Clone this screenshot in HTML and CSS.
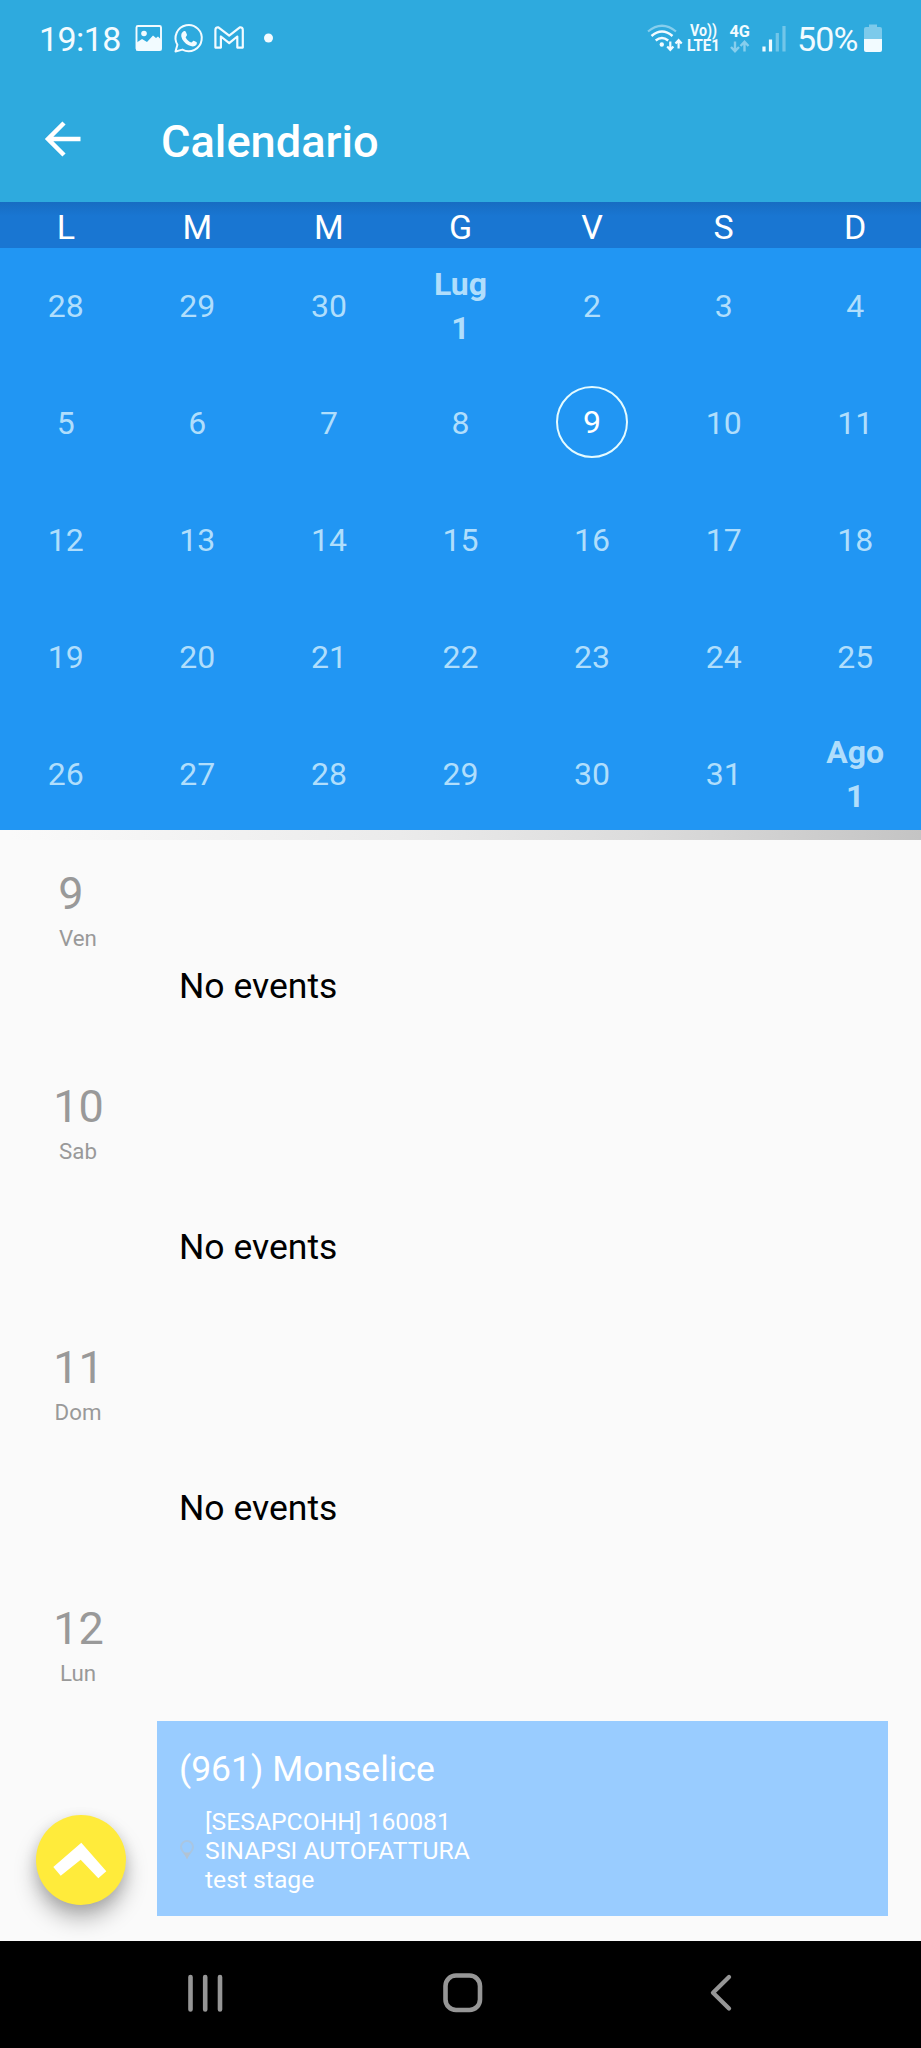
FILE: index.html
```html
<!DOCTYPE html>
<html lang="it">
<head>
<meta charset="utf-8">
<title>Calendario</title>
<link rel="stylesheet" href="styles.css">
</head>
<body>
<div class="screen">
  <header class="top">
    <div class="status">
      <span class="clock">19:18</span>
      <svg class="status-icons" width="145" height="78" viewBox="132 0 145 78" fill="none" stroke="#f2fbff">
        <rect x="136.500" y="26" width="24.500" height="24" rx="1.500" stroke-width="1.900"/>
        <circle cx="144" cy="33.500" r="2.800" fill="#f2fbff" stroke="none"/>
        <path d="M136 43l6-4 5 3 6-6.500 3 2.500 2-1.500 3.500 3.500v10.500h-25.500z" fill="#f2fbff" stroke="none"/>
        <path d="M175.500 51.500l1.900-6.700a13.100 13.100 0 1 1 5 4.800z" stroke-width="2" stroke-linejoin="round"/>
        <path d="M183.600 31.300c.9-.6 1.900-.3 2.300.6l1.100 2.800c.2.700-1.500 2.300-1.300 2.800 1.200 2.400 3.100 4.100 5.500 5.100.6.200 1.800-2.100 2.500-1.800l2.700 1.300c.8.500.5 2.200-.2 3-1.700 1.800-4.500 1.700-7.600.2-3.600-1.800-6.600-5.100-7.300-8.800-.3-2.200.6-4.300 2.300-5.200z" fill="#f2fbff" stroke="none"/>
        <path d="M215.400 47.600V30.200q0-3.200 3-2.900l10.800 8.300 10.600-8.300q3-.3 3 2.900v17.400h-5.500V36.500l-8.100 6.700-8.300-6.700v11.100z" stroke-width="2.200" stroke-linejoin="round"/>
        <circle cx="268.500" cy="38" r="4.500" fill="#f2fbff" stroke="none"/>
      </svg>
      <svg class="signals" width="146" height="78" viewBox="646 0 146 78" fill="none" stroke="#f2fbff">
        <path d="M648 31.500q14-11.500 28 0" stroke-width="2.200" opacity=".45"/>
        <path d="M651.500 36q10.500-9 21 0M655.700 40.500q6.200-5 12.500 0" stroke-width="2.500"/>
        <circle cx="661.800" cy="44.500" r="2.200" fill="#f2fbff" stroke="none"/>
        <path d="M670.300 41.500v8M667.200 46.500l3.100 3.300 3.100-3.300M678.600 48.500v-8M675.500 43.500l3.100-3.300 3.100 3.300" stroke-width="2.200"/>
        <g class="network" fill="#f2fbff" stroke="none">
          <text x="690" y="36" textLength="27" lengthAdjust="spacingAndGlyphs">Vo))</text>
          <text x="687" y="51" textLength="33" lengthAdjust="spacingAndGlyphs">LTE1</text>
          <text x="729.500" y="37" textLength="20.500" lengthAdjust="spacingAndGlyphs">4G</text>
        </g>
        <path d="M735 41.500v9.500M731 47l4 4.300 4-4.300M744.500 51.500V42M740.500 46l4-4.300 4 4.300" stroke-width="2.400" opacity=".45"/>
        <path d="M764 46.500v5M770.500 39.500v12" stroke-width="3.200"/>
        <path d="M777.300 33v18.500M784 26v25.500" stroke-width="3.200" opacity=".35"/>
      </svg>
      <span class="percent">50%</span>
      <svg class="battery" width="20" height="78" viewBox="863 0 20 78">
        <path d="M869 27v-2.500h8V27h3q2 0 2 2v10h-18V29q0-2 2-2z" fill="#f2fbff" opacity=".4"/>
        <path d="M864 39h18v11q0 2-2 2h-14q-2 0-2-2z" fill="#f2fbff"/>
      </svg>
    </div>
    <div class="appbar">
      <svg class="back" width="38" height="38" viewBox="0 0 38 38" fill="none" stroke="#fff" stroke-width="4.500">
        <path d="M36.500 19H4M20 3L4 19l16 16"/>
      </svg>
      <h1 class="title">Calendario</h1>
    </div>
  </header>

  <div class="weekdays"><span>L</span><span>M</span><span>M</span><span>G</span><span>V</span><span>S</span><span>D</span></div>
  <main class="month">
    <span>28</span><span>29</span><span>30</span><b>Lug<br>1</b><span>2</span><span>3</span><span>4</span>
    <span>5</span><span>6</span><span>7</span><span>8</span><span><i class="today">9</i></span><span>10</span><span>11</span>
    <span>12</span><span>13</span><span>14</span><span>15</span><span>16</span><span>17</span><span>18</span>
    <span>19</span><span>20</span><span>21</span><span>22</span><span>23</span><span>24</span><span>25</span>
    <span>26</span><span>27</span><span>28</span><span>29</span><span>30</span><span>31</span><b>Ago<br>1</b>
  </main>
  <div class="shade"></div>

  <section class="agenda">
    <article class="day first">
      <div class="date"><div class="num single">9</div><div class="name">Ven</div></div>
      <div class="event empty">No events</div>
    </article>
    <article class="day">
      <div class="date"><div class="num">10</div><div class="name">Sab</div></div>
      <div class="event empty">No events</div>
    </article>
    <article class="day">
      <div class="date"><div class="num">11</div><div class="name">Dom</div></div>
      <div class="event empty">No events</div>
    </article>
    <article class="day">
      <div class="date"><div class="num">12</div><div class="name">Lun</div></div>
      <div class="event card">
        <div>(961) Monselice</div>
        <div class="place">
          <svg width="16" height="22" viewBox="0 0 16 22" fill="none" stroke="#a9c6e2" stroke-width="2">
            <path d="M8 17C6.500 13.500 2 11.500 2 7a6 6 0 0 1 12 0c0 4.500-4.500 6.500-6 10z"/><path d="M4.500 12.500h7L8 19z" fill="#b3c3d2" stroke="none"/>
          </svg>
          <p>[SESAPCOHH] 160081<br>SINAPSI AUTOFATTURA<br>test stage</p>
        </div>
      </div>
    </article>
    <button class="fab" aria-label="Torna a oggi">
      <svg width="90" height="90" viewBox="0 0 90 90"><path d="M45.300 27.700L70.300 56.300l-8 7L44.700 44.700l-20 16-7.400-8.700z" fill="#fff"/></svg>
    </button>
  </section>

  <nav class="nav">
    <svg width="921" height="107" viewBox="0 1941 921 107" fill="none" stroke="#969696" stroke-linecap="round">
      <path d="M190.500 1977v32.500M205.200 1977v32.500M220 1977v32.500" stroke-width="4.600"/>
      <rect x="445.500" y="1975.500" width="34.500" height="34.500" rx="10.500" stroke-width="4.600"/>
      <path d="M729 1977l-16 15.800 16 15.700" stroke-width="4.300" stroke-linejoin="round"/>
    </svg>
  </nav>
</div>
</body>
</html>
```
FILE: styles.css
```css
* { box-sizing: border-box; }
body { margin: 0; font-family: Roboto, "Liberation Sans", sans-serif; }
.screen { width: 921px; height: 2048px; display: flex; flex-direction: column; background: #fafafa; overflow: hidden; }

.top { height: 202px; flex: none; background: #2eaade; color: #fff; }
.status { height: 78px; display: flex; padding-left: 39px; font-size: 34px; line-height: 79px; color: #f2fbff; }
.clock { width: 93px; white-space: nowrap; letter-spacing: -0.6px; }
.status-icons { flex: none; }
.signals { flex: none; margin-left: 369px; }
.network { font-size: 16.5px; font-weight: 700; }
.percent { width: 71px; padding-left: 5px; letter-spacing: -0.9px; white-space: nowrap; }
.battery { flex: none; }
.appbar { height: 124px; display: flex; padding: 42px 0 0 44px; }
.back { flex: none; }
.title { margin: 0 0 0 79px; font-size: 45.2px; font-weight: 500; line-height: 44px; }

.weekdays { height: 46px; flex: none; display: grid; grid-template-columns: repeat(7, 1fr); padding-top: 5px; background: linear-gradient(#176cc2, #1976d2 14px); color: #fff; font-size: 34px; line-height: 41px; text-align: center; }
.month { height: 582px; flex: none; overflow: hidden; display: grid; grid-template-columns: repeat(7, 1fr); grid-auto-rows: 117px; background: #2196f3; color: #b0defc; font-size: 32px; line-height: 43.6px; text-align: center; }
.month > * { display: flex; align-items: center; justify-content: center; }
.month b { font-weight: 700; }
.today { width: 72px; height: 72px; margin-bottom: 4px; border: 2px solid #e4fbff; border-radius: 50%; color: #fff; font-style: normal; line-height: 68px; }
.shade { height: 10px; flex: none; background: linear-gradient(90deg, #fafafa 10px, #ebebeb 400px, #dcdcdc 640px, #c4c4c4); }

.agenda { position: relative; height: 1101px; flex: none; overflow: hidden; padding-top: 26.6px; }
.day { height: 261.2px; display: flex; }
.day.first { height: 213.4px; }
.date { width: 157px; flex: none; color: #999; text-align: center; }
.num { font-size: 45px; line-height: 53px; }
.num.single { padding-right: 15px; }
.name { margin-top: 4px; padding-right: 1px; font-size: 22.3px; line-height: 28px; }
.event { width: 731px; margin-top: 119px; padding: 22px 22px 0; font-size: 35.5px; line-height: 53px; }
.first .event { margin-top: 71px; }
.empty { color: #000; }
.card { height: 195px; flex: none; background: #9cf; color: #fff; }
.place { display: flex; align-items: center; gap: 10px; margin-top: 10.5px; font-size: 24.7px; line-height: 29.2px; }
.place p { margin: 0; }
.fab { position: absolute; left: 36px; top: 974.5px; width: 90px; height: 90px; padding: 0; border: 0; border-radius: 50%; background: #ffeb3b; box-shadow: 0 14px 22px rgba(0,0,0,.27), 0 4px 14px rgba(0,0,0,.12); }
.fab svg { display: block; }

.nav { height: 107px; flex: none; background: #000; }
.nav svg { display: block; }
```
